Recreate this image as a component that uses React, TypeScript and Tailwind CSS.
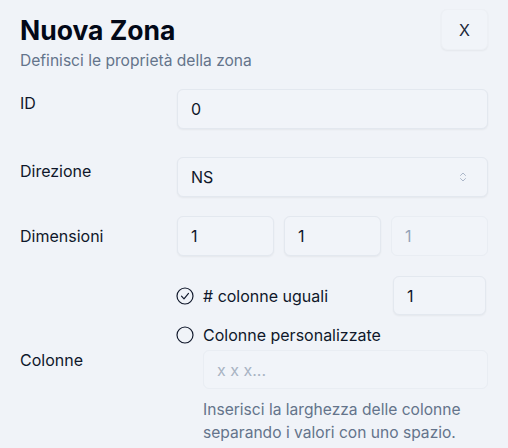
import React from "react";
import { ChevronsUpDown } from "lucide-react";

const inputCls =
  "h-10 rounded-md border border-[#e3e8ef] bg-[#f1f4f9] shadow-[0_1px_2px_rgba(0,0,0,0.05)] flex items-center px-[13px] text-[16px] text-[#0f172a]";

function RadioIcon({ checked }: { checked: boolean }) {
  return (
    <svg
      width="20"
      height="20"
      viewBox="0 0 24 24"
      fill="none"
      stroke="#0f172a"
      strokeWidth="1.4"
      strokeLinecap="round"
      strokeLinejoin="round"
      className="-ml-[2px] shrink-0"
    >
      <circle cx="12" cy="12" r="9.6" />
      {checked && <path d="M7.8 12.2l3 3.2 5.4-6.6" />}
    </svg>
  );
}

export default function App() {
  return (
    <div
      className="w-[508px] h-[448px] bg-[#f0f3f8] overflow-hidden px-5 pt-[9px]"
      style={{ fontFamily: "Inter, 'Noto Sans', sans-serif" }}
    >
      <div className="flex justify-between items-start">
        <div className="pt-[5px]">
          <h1 className="text-[26.5px] leading-[32px] font-bold text-[#020817]">Nuova Zona</h1>
          <p className="text-[15.6px] leading-5 text-[#64748b] mt-[5px]">
            Definisci le proprietà della zona
          </p>
        </div>
        <div className="w-[47px] h-[41px] rounded-md bg-[#f1f4f9] border border-[#edf0f5] shadow-[0_1px_2px_rgba(0,0,0,0.05)] flex items-center justify-center text-[16px] text-[#1e293b]">
          X
        </div>
      </div>

      <div className="flex mt-[18px]">
        <div className="w-[157px] pt-[4px] text-[16px] leading-5 text-[#0f172a]">ID</div>
        <div className={`${inputCls} flex-1`}>0</div>
      </div>

      <div className="flex mt-7">
        <div className="w-[157px] pt-[4px] text-[16px] leading-5 text-[#0f172a]">Direzione</div>
        <div className={`${inputCls} flex-1 justify-between`}>
          <span>NS</span>
          <ChevronsUpDown size={12} strokeWidth={1.5} className="text-[#94a3b8] mr-[5px]" />
        </div>
      </div>

      <div className="flex items-center mt-[19px]">
        <div className="w-[157px] text-[16px] leading-5 text-[#0f172a]">Dimensioni</div>
        <div className="flex-1 grid grid-cols-3 gap-[10px]">
          <div className={inputCls}>1</div>
          <div className={inputCls}>1</div>
          <div className={`${inputCls} text-[#94a3b8] border-[#e9edf3] shadow-none`}>1</div>
        </div>
      </div>

      <div className="flex items-center mt-5">
        <div className="w-[157px] text-[16px] leading-5 text-[#0f172a]">Colonne</div>
        <div className="flex-1 flex flex-col">
          <div className="flex items-center">
            <RadioIcon checked />
            <span className="ml-2 text-[16px] text-[#0f172a] flex-1">
              # colonne uguali
            </span>
            <div className={`${inputCls} w-[93px] h-[39px] mr-[2px]`}>1</div>
          </div>
          <div className="flex items-center mt-[8px]">
            <RadioIcon checked={false} />
            <span className="ml-2 text-[16px] text-[#0f172a]">Colonne personalizzate</span>
          </div>
          <div className="pl-[26px] mt-[3px]">
            <div className={`${inputCls} h-[39px] text-[#a8b3c3] border-[#e9edf3] shadow-none`}>
              x x x...
            </div>
            <p className="text-[15.6px] leading-[23px] text-[#64748b] mt-[9px]">
              Inserisci la larghezza delle colonne
              <br />
              separando i valori con uno spazio.
            </p>
          </div>
        </div>
      </div>
    </div>
  );
}
